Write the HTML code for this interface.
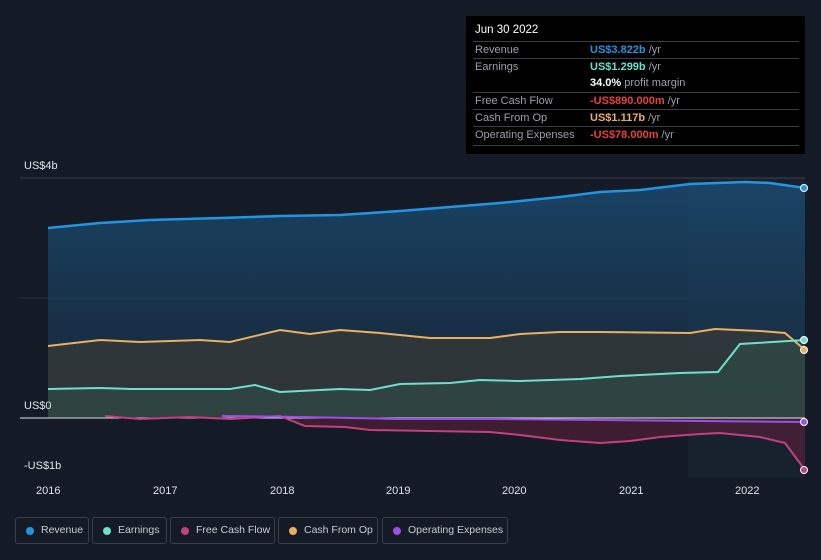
<!DOCTYPE html>
<html><head><style>
body{margin:0;width:821px;height:560px;background:#151b26;font-family:"Liberation Sans",sans-serif;overflow:hidden;position:relative}
.tt{position:absolute;left:466px;top:16px;width:339px;height:138px;background:#000;border-radius:2px;font-size:11px;color:#9aa0a8}
.tt .h{position:absolute;left:9px;top:8px;color:#fff;font-size:11.5px}
.row{position:absolute;left:7px;width:326px;border-top:1px solid #3a3d42;height:17px;white-space:nowrap}
.row span{position:absolute;left:2px;top:2px}
.row b{position:absolute;left:117px;top:2px;font-weight:bold}
.row i{font-style:normal;font-weight:normal;color:#9aa0a8}
.lg{position:absolute;top:517px;height:27px;border:1px solid #3a3f4a;border-radius:3px;font-size:10.5px;color:#c8ccd2;box-sizing:border-box;white-space:nowrap}
.lg::before{content:"";position:absolute;left:10px;top:9px;width:8px;height:8px;border-radius:50%;background:var(--c)}
.lg span{position:absolute;left:25px;top:6px}
.ax{position:absolute;font-size:11px;color:#e0e3e8}
</style></head><body>
<svg width="821" height="560" style="position:absolute;left:0;top:0">
<defs>
<linearGradient id="rg" x1="0" y1="0" x2="0" y2="1"><stop offset="0" stop-color="#1a4d74" stop-opacity=".8"/><stop offset="1" stop-color="#18324a" stop-opacity=".5"/></linearGradient>
</defs>
<rect x="688" y="178" width="117" height="300" fill="#1b2a38" opacity=".5"/>
<line x1="20" y1="178" x2="805" y2="178" stroke="#3a3f4a"/>
<line x1="20" y1="298" x2="805" y2="298" stroke="#2c313a"/>
<path d="M48 228 L100 223 L150 220 L220 218 L280 216 L340 215 L400 211 L450 207 L500 203 L560 197 L600 192 L640 190 L690 184 L745 182 L770 183 L805 188 L805 418 L48 418Z" fill="url(#rg)"/>
<path d="M48 346 L100 340 L140 342 L200 340 L230 342 L280 330 L310 334 L340 330 L380 333 L430 338 L490 338 L520 334 L560 332 L600 332 L690 333 L715 329 L760 331 L785 333 L805 350 L805 418 L48 418Z" fill="#3e3c33" opacity=".6"/>
<path d="M48 389 L100 388 L130 389 L230 389 L255 385 L280 392 L340 389 L370 390 L400 384 L450 383 L480 380 L520 381 L580 379 L620 376 L680 373 L718 372 L740 344 L805 340 L805 418 L48 418Z" fill="#2f5a52" opacity=".4"/>
<path d="M105 416 L140 419 L190 417 L230 419 L280 416 L305 426 L345 427 L370 430 L430 431 L490 432 L520 435 L560 440 L600 443 L630 441 L660 437 L700 434 L720 433 L760 437 L785 443 L805 470 L805 418 L105 418Z" fill="#5a2038" opacity=".6"/>
<line x1="20" y1="418" x2="805" y2="418" stroke="#e0e3e8"/>
<path d="M48 228 L100 223 L150 220 L220 218 L280 216 L340 215 L400 211 L450 207 L500 203 L560 197 L600 192 L640 190 L690 184 L745 182 L770 183 L805 188" fill="none" stroke="#2394df" stroke-width="2.5"/>
<path d="M48 346 L100 340 L140 342 L200 340 L230 342 L280 330 L310 334 L340 330 L380 333 L430 338 L490 338 L520 334 L560 332 L600 332 L690 333 L715 329 L760 331 L785 333 L805 350" fill="none" stroke="#e8b062" stroke-width="2"/>
<path d="M48 389 L100 388 L130 389 L230 389 L255 385 L280 392 L340 389 L370 390 L400 384 L450 383 L480 380 L520 381 L580 379 L620 376 L680 373 L718 372 L740 344 L805 340" fill="none" stroke="#6ee0c9" stroke-width="2"/>
<path d="M105 416 L140 419 L190 417 L230 419 L280 416 L305 426 L345 427 L370 430 L430 431 L490 432 L520 435 L560 440 L600 443 L630 441 L660 437 L700 434 L720 433 L760 437 L785 443 L805 470" fill="none" stroke="#c2407f" stroke-width="2"/>
<path d="M222 416 L300 417 L400 419 L500 419 L600 420 L700 421 L805 422" fill="none" stroke="#9d4ee8" stroke-width="2"/>
<circle cx="804" cy="188" r="3.5" fill="#2394df" stroke="#fff" stroke-width="1"/>
<circle cx="804" cy="340" r="3.5" fill="#6ee0c9" stroke="#fff" stroke-width="1"/>
<circle cx="804" cy="350" r="3.5" fill="#e8b062" stroke="#fff" stroke-width="1"/>
<circle cx="804" cy="422" r="3.5" fill="#9d4ee8" stroke="#fff" stroke-width="1"/>
<circle cx="804" cy="470" r="3.5" fill="#c2407f" stroke="#fff" stroke-width="1"/>
</svg>
<div class="ax" style="left:24px;top:160px">US$4b</div>
<div class="ax" style="left:24px;top:400px">US$0</div>
<div class="ax" style="left:24px;top:460px">-US$1b</div>
<div class="ax" style="left:36px;top:485px">2016</div>
<div class="ax" style="left:153px;top:485px">2017</div>
<div class="ax" style="left:270px;top:485px">2018</div>
<div class="ax" style="left:386px;top:485px">2019</div>
<div class="ax" style="left:502px;top:485px">2020</div>
<div class="ax" style="left:619px;top:485px">2021</div>
<div class="ax" style="left:735px;top:485px">2022</div>
<div class="tt">
<div class="h">Jun 30 2022</div>
<div class="row" style="top:25px"><span>Revenue</span><b style="color:#2394df">US$3.822b <i>/yr</i></b></div>
<div class="row" style="top:42px"><span>Earnings</span><b style="color:#6ee0c9">US$1.299b <i>/yr</i></b></div>
<div class="row" style="top:59px;border-top:none"><b style="color:#fff">34.0% <i>profit margin</i></b></div>
<div class="row" style="top:76px"><span>Free Cash Flow</span><b style="color:#e84040">-US$890.000m <i>/yr</i></b></div>
<div class="row" style="top:93px"><span>Cash From Op</span><b style="color:#e8b062">US$1.117b <i>/yr</i></b></div>
<div class="row" style="top:110px"><span>Operating Expenses</span><b style="color:#e84040">-US$78.000m <i>/yr</i></b></div>
<div class="row" style="top:129px;height:0"></div>
</div>
<div class="lg" style="left:15px;width:74px;--c:#2394df"><span>Revenue</span></div>
<div class="lg" style="left:92px;width:75px;--c:#6ee0c9"><span>Earnings</span></div>
<div class="lg" style="left:170px;width:105px;--c:#c2407f"><span>Free Cash Flow</span></div>
<div class="lg" style="left:278px;width:100px;--c:#e8b062"><span>Cash From Op</span></div>
<div class="lg" style="left:382px;width:126px;--c:#9d4ee8"><span>Operating Expenses</span></div>
</body></html>
